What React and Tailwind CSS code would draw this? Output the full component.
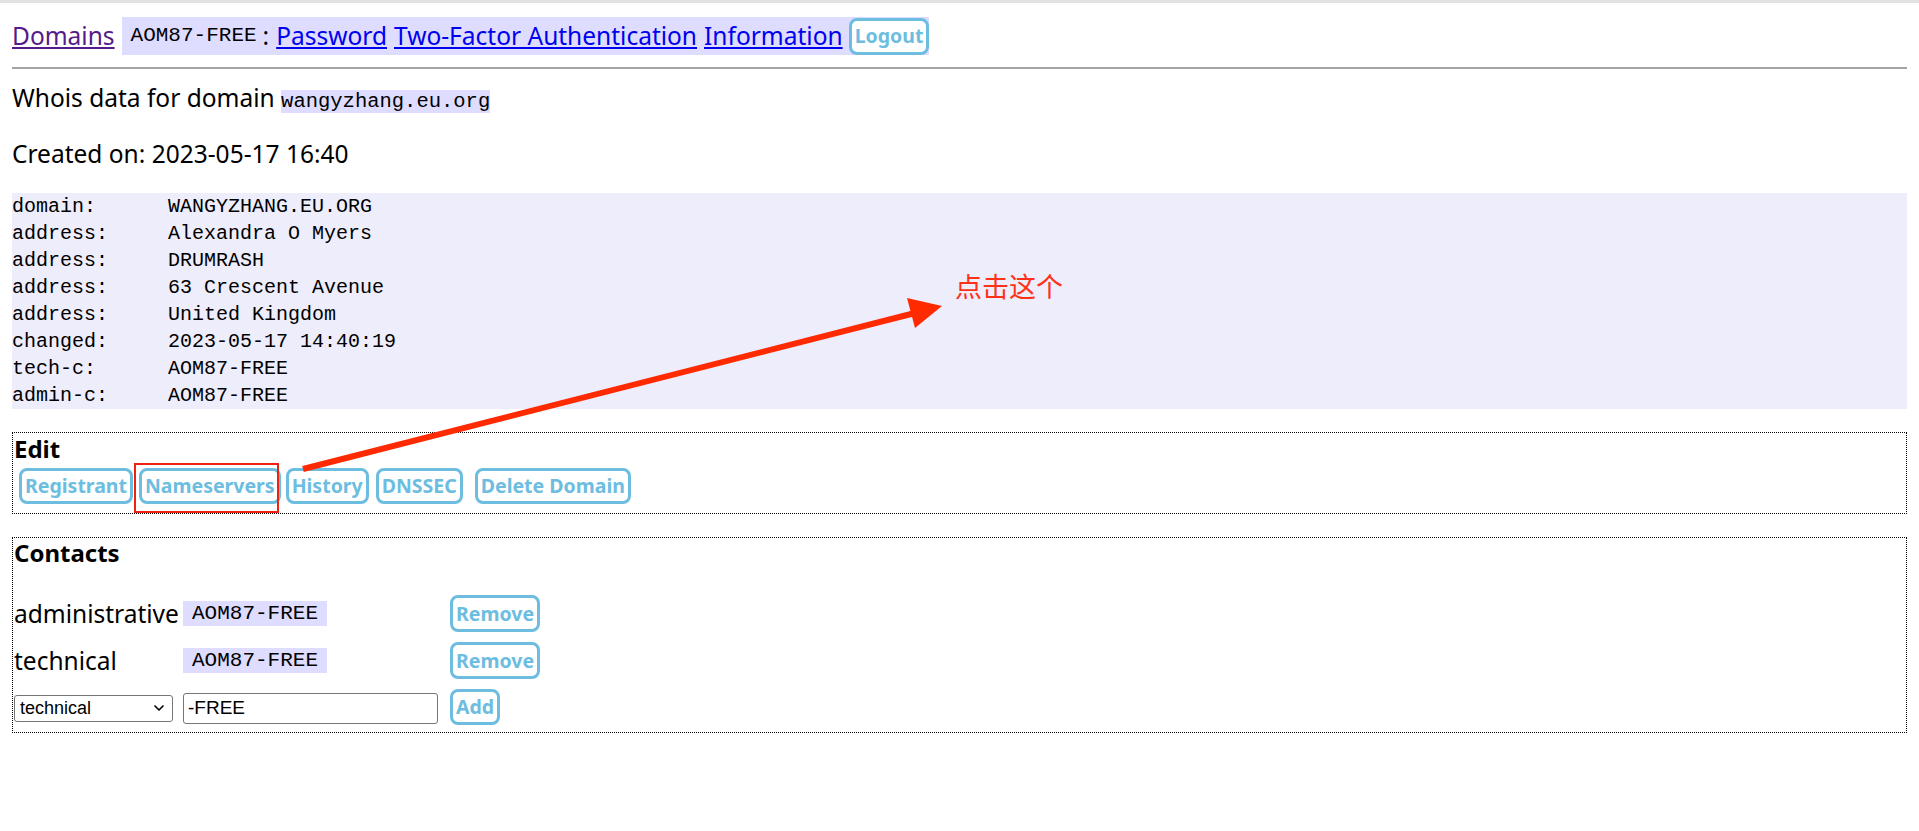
import { ChevronDown } from "lucide-react";

const mono = { fontFamily: '"Liberation Mono", "Noto Sans CJK SC", monospace' };

const whois = [
  ["domain:", "WANGYZHANG.EU.ORG"],
  ["address:", "Alexandra O Myers"],
  ["address:", "DRUMRASH"],
  ["address:", "63 Crescent Avenue"],
  ["address:", "United Kingdom"],
  ["changed:", "2023-05-17 14:40:19"],
  ["tech-c:", "AOM87-FREE"],
  ["admin-c:", "AOM87-FREE"],
];

function Btn({ children, className = "" }) {
  return (
    <button
      className={
        "border-[3px] border-[#6cbde0] rounded-[8px] bg-white text-[#6cbde0] font-bold text-[19.5px] leading-[24px] px-[3px] " +
        className
      }
    >
      {children}
    </button>
  );
}

function App() {
  return (
    <div
      className="relative min-h-screen bg-white border-t-[3px] border-[#e2e2e2] text-black"
      style={{ fontFamily: '"Noto Sans", "Noto Sans CJK SC", sans-serif' }}
    >
      <div className="px-3">
        {/* top menu */}
        <div className="flex items-center h-[38px] mt-[14px] text-[24.5px]">
          <a href="#" className="text-[#551a8b] underline">Domains</a>
          <div className="ml-[7px] flex items-center bg-[#dedcff] h-[38px] pl-[9px]">
            <span style={mono} className="text-[21px]">AOM87-FREE</span>
            <span className="ml-[6px] mr-[7px]">:</span>
            <a href="#" className="text-[#0000ee] underline">Password</a>
            <a href="#" className="ml-[7px] text-[#0000ee] underline">Two-Factor Authentication</a>
            <a href="#" className="ml-[7px] text-[#0000ee] underline">Information</a>
            <Btn className="ml-[6px] h-[37px]">Logout</Btn>
          </div>
        </div>
        <hr className="mt-[12px] border-t-2 border-[#a3a3a3]" />

        <p className="mt-[14px] text-[24.5px] leading-[30px]">
          Whois data for domain{" "}
          <span style={mono} className="bg-[#dedcff] text-[20.5px]">wangyzhang.eu.org</span>
        </p>
        <p className="mt-[22px] text-[24.5px] leading-[30px]">Created on: 2023-05-17 16:40</p>

        <div style={mono} className="mt-[24px] bg-[#eeedfc] text-[20px] leading-[27px]">
          {whois.map(([k, v], i) => (
            <div key={i} className="flex whitespace-pre">
              <span className="w-[156px]">{k}</span>
              <span>{v}</span>
            </div>
          ))}
        </div>

        {/* Edit */}
        <div className="mt-[23px] border border-dotted border-black h-[82px] pt-[1px] px-[1px]">
          <div className="font-bold text-[24px] leading-[30px]">Edit</div>
          <div className="flex items-center mt-[4px] ml-[5px]">
            <Btn className="h-[36px]">Registrant</Btn>
            <Btn className="ml-[6px] h-[36px]">Nameservers</Btn>
            <Btn className="ml-[5px] h-[36px]">History</Btn>
            <Btn className="ml-[7px] h-[36px]">DNSSEC</Btn>
            <Btn className="ml-[12px] h-[36px]">Delete Domain</Btn>
          </div>
        </div>

        {/* Contacts */}
        <div className="mt-[23px] border border-dotted border-black h-[196px] px-[1px]">
          <div className="font-bold text-[24px] leading-[30px]">Contacts</div>
          <div className="mt-[27px] grid grid-cols-[169px_267px_auto] items-center gap-y-[10px]">
            <span className="text-[24.5px] leading-[36px]">administrative</span>
            <span><span style={mono} className="bg-[#dedcff] text-[21px] px-[9px] py-[1px]">AOM87-FREE</span></span>
            <span><Btn className="h-[37px]">Remove</Btn></span>

            <span className="text-[24.5px] leading-[36px]">technical</span>
            <span><span style={mono} className="bg-[#dedcff] text-[21px] px-[9px] py-[1px]">AOM87-FREE</span></span>
            <span><Btn className="h-[37px]">Remove</Btn></span>

            <span className="w-[159px] h-[27px] mt-[2px] border border-[#767676] rounded-[3px] flex items-center justify-between px-[5px] text-[18px]"
              style={{ fontFamily: '"Liberation Sans", Arial, sans-serif' }}>
              technical
              <ChevronDown size={16} strokeWidth={2.5} />
            </span>
            <span className="w-[255px] h-[31px] mt-[2px] border border-[#767676] rounded-[3px] flex items-center px-[4px] text-[19px]"
              style={{ fontFamily: '"Liberation Sans", Arial, sans-serif' }}>
              -FREE
            </span>
            <span><Btn className="h-[36px]">Add</Btn></span>
          </div>
        </div>
      </div>

      {/* annotation overlay */}
      <svg className="absolute left-0 top-0 pointer-events-none" width="1919" height="831">
        <rect x="135" y="461" width="143" height="48" fill="none" stroke="#ee2211" strokeWidth="2" />
        <line x1="303" y1="466" x2="915" y2="310" stroke="#ff2a00" strokeWidth="6" />
        <polygon points="942,303 907,295 915,325" fill="#ff2a00" />
      </svg>
      <div className="absolute left-[955px] top-[263px] text-[27px] text-[#ff3218]"
        style={{ fontFamily: '"Noto Sans CJK SC", sans-serif' }}>
        点击这个
      </div>
    </div>
  );
}

export default App;
